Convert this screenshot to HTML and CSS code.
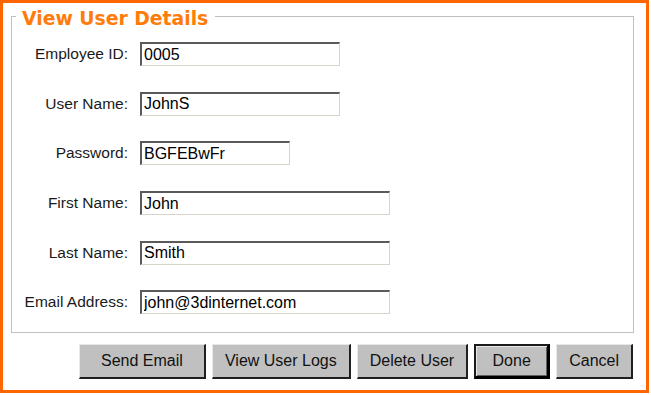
FILE: index.html
```html
<!DOCTYPE html>
<html lang="en">
<head>
    <meta charset="UTF-8">
    <title>View User Details</title>
    <link rel="stylesheet" href="styles.css">
</head>
<body>
    <div class="panel">
        <fieldset class="details">
            <legend>View User Details</legend>
            <div class="form-grid">
                <label for="emp_id">Employee ID:</label>
                <input type="text" id="emp_id" class="w-200" value="0005">

                <label for="username">User Name:</label>
                <input type="text" id="username" class="w-200" value="JohnS">

                <label for="password">Password:</label>
                <input type="text" id="password" class="w-150" value="BGFEBwFr">

                <label for="first_name">First Name:</label>
                <input type="text" id="first_name" class="w-250" value="John">

                <label for="last_name">Last Name:</label>
                <input type="text" id="last_name" class="w-250" value="Smith">

                <label for="email">Email Address:</label>
                <input type="text" id="email" class="w-250" value="john@3dinternet.com">
            </div>
        </fieldset>

        <div class="actions">
            <button type="button" class="btn-send">Send Email</button>
            <button type="button">View User Logs</button>
            <button type="button">Delete User</button>
            <button type="button" class="btn-default">Done</button>
            <button type="button">Cancel</button>
        </div>
    </div>
</body>
</html>
```

FILE: styles.css
```css
body {
    margin: 0;
    background: #ffffff;
    font-family: "Liberation Sans", Arial, sans-serif;
    color: #111;
}
.panel {
    box-sizing: border-box;
    width: 649px;
    height: 393px;
    border: 3px solid #ff6600;
    padding: 2px 12px 0 8px;
}
.details {
    margin: 0;
    border: 1px solid #c0c0c0;
    padding: 15px 0 17.5px 4px;
}
.details legend {
    color: #ff7b0a;
    font-family: "DejaVu Sans", Verdana, sans-serif;
    font-weight: bold;
    font-size: 18.8px;
    line-height: 16px;
    padding: 6px 7px 0 6px;
}
.form-grid {
    display: grid;
    grid-template-columns: 112px auto;
    grid-auto-rows: 24px;
    column-gap: 12px;
    row-gap: 25.7px;
    align-items: center;
    justify-items: start;
}
.form-grid label {
    justify-self: end;
    font-size: 15.5px;
    color: #1a1a1a;
}
.form-grid input {
    box-sizing: border-box;
    height: 24px;
    margin: 0;
    padding: 0 2px;
    font-family: "Liberation Sans", Arial, sans-serif;
    font-size: 16px;
    color: #000;
    background: #fff;
    border-style: solid;
    border-width: 2px 1px 1px 2px;
    border-color: #5a5a5a #d8d4cc #d8d4cc #5a5a5a;
    outline: none;
}
.w-150 { width: 150px; }
.w-200 { width: 200px; }
.w-250 { width: 250px; }
.actions {
    display: flex;
    justify-content: flex-end;
    gap: 6px;
    margin-top: 11px;
    padding-right: 1px;
}
.actions button {
    box-sizing: border-box;
    height: 35px;
    min-width: 75px;
    padding: 0 12px;
    font-family: "Liberation Sans", Arial, sans-serif;
    font-size: 16px;
    color: #111;
    background: #c0c0c0;
    border-style: solid;
    border-width: 1px 2px 2px 1px;
    border-color: #e8e8e8 #202020 #202020 #e8e8e8;
}
.actions .btn-send {
    min-width: 127px;
}
.actions .btn-default {
    min-width: 76px;
    border-width: 2px 3px 3px 2px;
    border-color: #1a1a1a #000 #000 #1a1a1a;
    box-shadow: inset 1px 1px 0 #e8e8e8, inset -1px -1px 0 #606060;
}
```
